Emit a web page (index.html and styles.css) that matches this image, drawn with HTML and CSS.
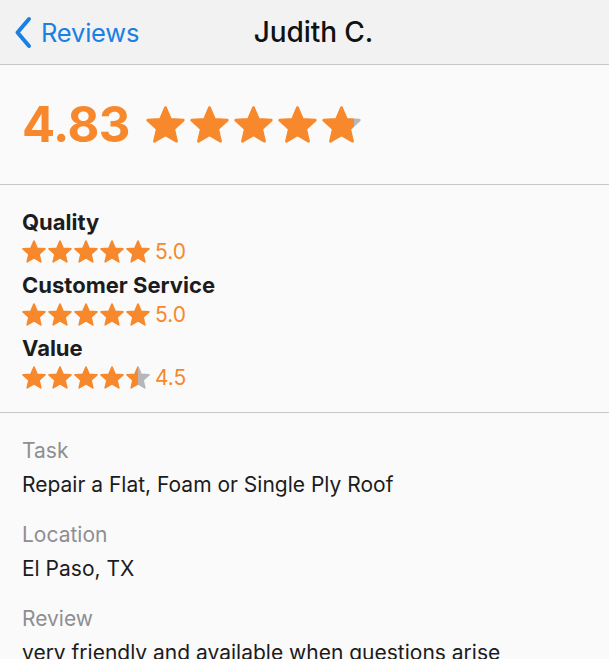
FILE: index.html
```html
<!DOCTYPE html>
<html lang="en">
<head>
<meta charset="utf-8">
<title>Judith C.</title>
<link rel="stylesheet" href="styles.css">
</head>
<body>
<svg class="defs" width="0" height="0" aria-hidden="true">
  <defs>
    <symbol id="star" viewBox="0 0 100 95">
      <polygon points="50,4 62.9,34.2 95.6,36.5 70.9,58.8 78.4,90.5 50,74 21.6,90.5 29.1,58.8 4.4,36.5 37.1,34.2" stroke-linejoin="round" stroke-width="7"/>
    </symbol>
    <linearGradient id="g88" x1="0" x2="1" y1="0" y2="0">
      <stop offset="0.86" stop-color="#f7882c"/>
      <stop offset="0.86" stop-color="#b7b7bb"/>
    </linearGradient>
    <linearGradient id="g50" x1="0" x2="1" y1="0" y2="0">
      <stop offset="0.52" stop-color="#f7882c"/>
      <stop offset="0.52" stop-color="#b7b7bb"/>
    </linearGradient>
  </defs>
</svg>

<header class="nav">
  <a class="back" href="#">
    <svg class="chev" width="18" height="33" viewBox="0 0 18 33"><path d="M15 3 L3.5 16.5 L15 30" fill="none" stroke="#1a80e2" stroke-width="4" stroke-linecap="round" stroke-linejoin="round"/></svg>
    <span>Reviews</span>
  </a>
  <h1 class="title">Judith C.</h1>
  <span></span>
</header>

<section class="summary">
  <span class="score">4.83</span>
  <span class="stars big">
    <svg class="on"><use href="#star"/></svg>
    <svg class="on"><use href="#star"/></svg>
    <svg class="on"><use href="#star"/></svg>
    <svg class="on"><use href="#star"/></svg>
    <svg class="part88"><use href="#star"/></svg>
  </span>
</section>

<section class="ratings">
  <div class="rating">
    <div class="rname">Quality</div>
    <div class="rrow">
      <span class="stars small">
        <svg class="on"><use href="#star"/></svg><svg class="on"><use href="#star"/></svg><svg class="on"><use href="#star"/></svg><svg class="on"><use href="#star"/></svg><svg class="on"><use href="#star"/></svg>
      </span>
      <span class="rval">5.0</span>
    </div>
  </div>
  <div class="rating">
    <div class="rname">Customer Service</div>
    <div class="rrow">
      <span class="stars small">
        <svg class="on"><use href="#star"/></svg><svg class="on"><use href="#star"/></svg><svg class="on"><use href="#star"/></svg><svg class="on"><use href="#star"/></svg><svg class="on"><use href="#star"/></svg>
      </span>
      <span class="rval">5.0</span>
    </div>
  </div>
  <div class="rating">
    <div class="rname">Value</div>
    <div class="rrow">
      <span class="stars small">
        <svg class="on"><use href="#star"/></svg><svg class="on"><use href="#star"/></svg><svg class="on"><use href="#star"/></svg><svg class="on"><use href="#star"/></svg><svg class="part50"><use href="#star"/></svg>
      </span>
      <span class="rval">4.5</span>
    </div>
  </div>
</section>

<section class="details">
  <div class="field">
    <div class="label">Task</div>
    <div class="value">Repair a Flat, Foam or Single Ply Roof</div>
  </div>
  <div class="field">
    <div class="label">Location</div>
    <div class="value">El Paso, TX</div>
  </div>
  <div class="field">
    <div class="label">Review</div>
    <div class="value">very friendly and available when questions arise</div>
  </div>
</section>
</body>
</html>
```

FILE: styles.css
```css
* { box-sizing: border-box; }
html, body { margin: 0; padding: 0; }
body {
  background: #fafafa;
  font-family: Inter, "Noto Sans", sans-serif;
  color: #1c1c1e;
  overflow: hidden;
}
.defs { position: absolute; width: 0; height: 0; overflow: hidden; }

.nav {
  height: 65px;
  background: #f2f2f2;
  border-bottom: 1px solid #c8c8c8;
  display: grid;
  grid-template-columns: 1fr auto 1fr;
  align-items: center;
}
.back {
  display: flex;
  align-items: center;
  gap: 9px;
  padding-left: 14px;
  color: #1a80e2;
  text-decoration: none;
  font-size: 25.5px;
  letter-spacing: -0.2px;
}
.title {
  margin: 0 0 0 18px;
  font-size: 28px;
  font-weight: 500;
  color: #111;
  letter-spacing: -0.1px;
}

.summary {
  height: 120px;
  border-bottom: 1px solid #c8c8c8;
  display: flex;
  align-items: center;
  padding-left: 22px;
  gap: 16px;
}
.score {
  font-size: 49px;
  font-weight: 700;
  color: #f7882c;
  letter-spacing: -0.5px;
}
.stars { display: flex; }
.stars svg { fill: #f7882c; stroke: #f7882c; overflow: visible; }
.stars svg.part88 { fill: url(#g88); stroke: url(#g88); }
.stars svg.part50 { fill: url(#g50); stroke: url(#g50); }
.big { gap: 5px; }
.big svg { width: 39px; height: 37px; }
.small { gap: 2px; }
.small svg { width: 24px; height: 23px; }

.ratings {
  height: 228px;
  border-bottom: 1px solid #c8c8c8;
  padding: 24px 22px 0;
  display: flex;
  flex-direction: column;
  gap: 8px;
}
.rname {
  font-size: 22px;
  font-weight: 700;
  line-height: 27px;
  color: #1c1c1e;
}
.rrow {
  display: flex;
  align-items: center;
  gap: 5px;
  margin-top: 2px;
  height: 26px;
}
.rval {
  font-size: 21px;
  color: #f7882c;
}

.details {
  padding: 25px 22px 0;
  display: flex;
  flex-direction: column;
  gap: 25px;
}
.label {
  font-size: 21px;
  line-height: 25px;
  color: #8e8e93;
}
.value {
  margin-top: 9px;
  font-size: 21px;
  line-height: 25px;
  color: #1c1c1e;
  white-space: nowrap;
}
```
